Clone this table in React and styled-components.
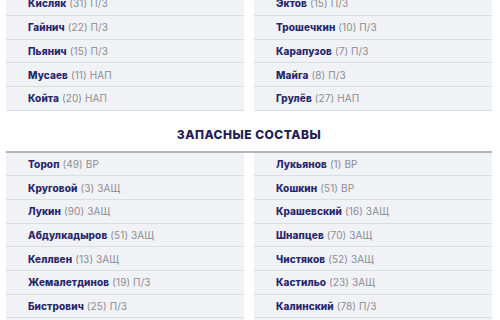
import React from "react";
import styled, { createGlobalStyle } from "styled-components";

const Global = createGlobalStyle`
  html, body { margin: 0; padding: 0; background: #ffffff; }
  body { font-family: Inter, "Open Sans", "Liberation Sans", sans-serif; overflow: hidden; }
`;

const Page = styled.div`
  width: 500px;
  height: 320px;
  overflow: hidden;
  padding: 0 8px 0 6px;
  box-sizing: border-box;
`;

const Columns = styled.div`
  display: grid;
  grid-template-columns: 1fr 1fr;
  column-gap: 10px;
  margin-top: ${(p) => p.$offset || 0}px;
  border-top: ${(p) => (p.$ruled ? "2px solid #b4b5bb" : "none")};
`;

const Column = styled.div`
  display: flex;
  flex-direction: column;
`;

const Row = styled.div`
  height: ${(p) => p.$h}px;
  box-sizing: border-box;
  background: #f1f2f6;
  border-bottom: 1px solid #dcdde2;
  display: flex;
  align-items: center;
  padding-left: 22px;
  font-size: 10px;
  white-space: nowrap;
  letter-spacing: 0.1px;
`;

const Name = styled.span`
  font-weight: 800;
  color: #27276a;
  margin-right: 3px;
`;

const Meta = styled.span`
  color: #8b8c92;
  font-weight: 400;
`;

const Heading = styled.div`
  text-align: center;
  font-size: 12px;
  font-weight: 800;
  color: #202050;
  letter-spacing: 0.5px;
  padding: 17px 0 10px;
  line-height: 13px;
`;

const starters = [
  [["Кисляк", "(31) П/З"], ["Эктов", "(15) П/З"]],
  [["Гайнич", "(22) П/З"], ["Трошечкин", "(10) П/З"]],
  [["Пьянич", "(15) П/З"], ["Карапузов", "(7) П/З"]],
  [["Мусаев", "(11) НАП"], ["Майга", "(8) П/З"]],
  [["Койта", "(20) НАП"], ["Грулёв", "(27) НАП"]],
];

const subs = [
  [["Тороп", "(49) ВР"], ["Лукьянов", "(1) ВР"]],
  [["Круговой", "(3) ЗАЩ"], ["Кошкин", "(51) ВР"]],
  [["Лукин", "(90) ЗАЩ"], ["Крашевский", "(16) ЗАЩ"]],
  [["Абдулкадыров", "(51) ЗАЩ"], ["Шнапцев", "(70) ЗАЩ"]],
  [["Келлвен", "(13) ЗАЩ"], ["Чистяков", "(52) ЗАЩ"]],
  [["Жемалетдинов", "(19) П/З"], ["Кастильо", "(23) ЗАЩ"]],
  [["Бистрович", "(25) П/З"], ["Калинский", "(78) П/З"]],
  [["Мирошниченко", "(9) НАП"], ["Гладышев", "(41) НАП"]],
];

function Table({ rows, h, offset, ruled }) {
  return (
    <Columns $offset={offset} $ruled={ruled}>
      {[0, 1].map((c) => (
        <Column key={c}>
          {rows.map((r, i) => (
            <Row key={i} $h={h}>
              <Name>{r[c][0]}</Name>
              <Meta>{r[c][1]}</Meta>
            </Row>
          ))}
        </Column>
      ))}
    </Columns>
  );
}

export default function App() {
  return (
    <Page>
      <Global />
      <Table rows={starters} h={23.75} offset={-8} />
      <Heading>ЗАПАСНЫЕ СОСТАВЫ</Heading>
      <Table rows={subs} h={23.67} ruled />
    </Page>
  );
}
